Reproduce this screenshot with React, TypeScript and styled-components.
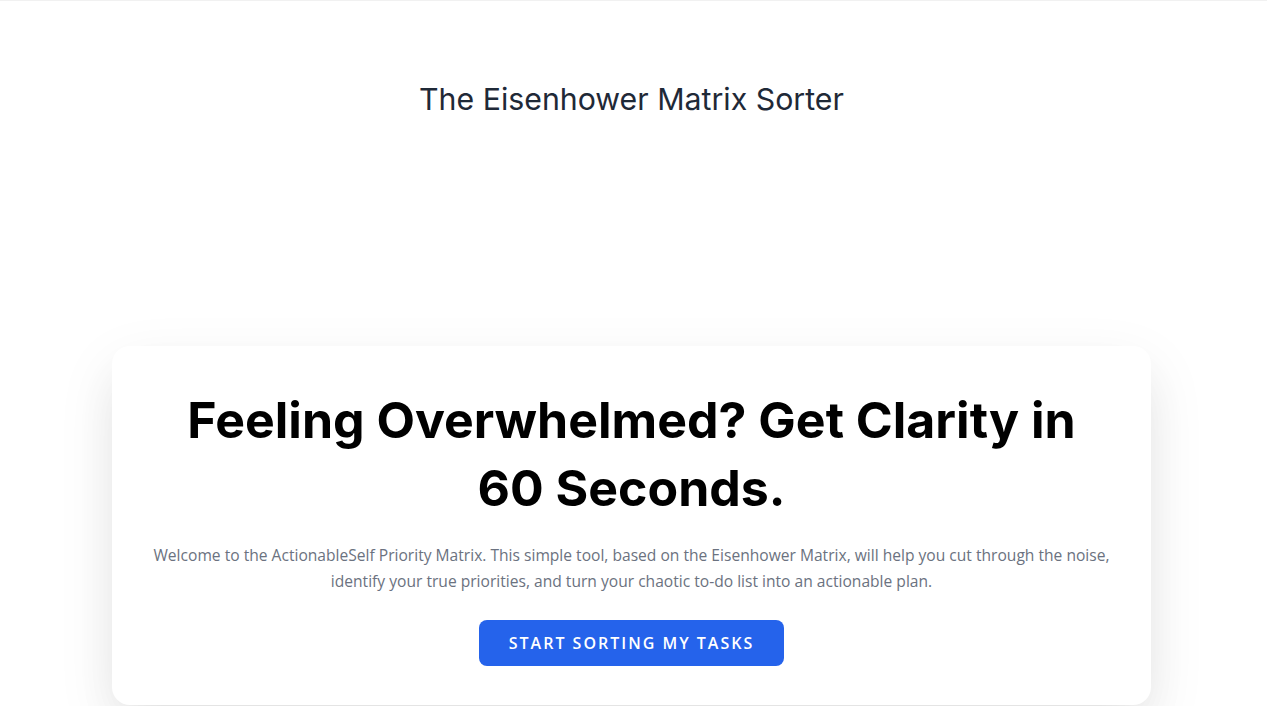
import React from "react";
import styled, { createGlobalStyle } from "styled-components";

const GlobalStyle = createGlobalStyle`
  * { box-sizing: border-box; }
  body {
    margin: 0;
    background: #ffffff;
    font-family: "Open Sans", "Noto Sans", sans-serif;
  }
`;

export default function App() {
  return (
    <>
      <GlobalStyle />
      <Page>
        <Header>
          <SiteTitle>The Eisenhower Matrix Sorter</SiteTitle>
        </Header>
        <Main>
          <IntroCard>
            <Headline>Feeling Overwhelmed? Get Clarity in 60 Seconds.</Headline>
            <Lead>
              Welcome to the ActionableSelf Priority Matrix. This simple tool, based on the Eisenhower
              Matrix, will help you cut through the noise, identify your true priorities, and turn your
              chaotic to-do list into an actionable plan.
            </Lead>
            <StartButton type="button">Start Sorting My Tasks</StartButton>
          </IntroCard>
        </Main>
      </Page>
    </>
  );
}

const Page = styled.div`
  min-height: 100vh;
  border-top: 1px solid #f1f1f1;
  padding-right: 4px;
`;

const Header = styled.header`
  display: flex;
  justify-content: center;
  padding: 80px 0;
`;

const SiteTitle = styled.h1`
  margin: 0;
  font-family: Inter, "Noto Sans", sans-serif;
  font-size: 30.3px;
  font-weight: 400;
  line-height: 36px;
  color: #1f2937;
`;

const Main = styled.main`
  display: flex;
  justify-content: center;
  padding: 149px 0 40px;
`;

const IntroCard = styled.section`
  width: 1039px;
  padding: 40px 40px 39px;
  border-radius: 18px;
  background: #ffffff;
  box-shadow: 0 20px 60px rgba(0, 0, 0, 0.08), 0 25px 50px -12px rgba(0, 0, 0, 0.08);
  display: flex;
  flex-direction: column;
  align-items: center;
  text-align: center;
`;

const Headline = styled.h2`
  margin: 0 0 20px;
  max-width: 920px;
  font-family: Inter, "Noto Sans", sans-serif;
  font-size: 50px;
  font-weight: 700;
  line-height: 68px;
  color: #000000;
`;

const Lead = styled.p`
  margin: 0 0 26px;
  font-size: 15.6px;
  line-height: 26px;
  color: #6b7280;
`;

const StartButton = styled.button`
  height: 46px;
  padding: 0 30px;
  border: none;
  border-radius: 8px;
  background: #2563eb;
  color: #ffffff;
  font-family: "Open Sans", "Noto Sans", sans-serif;
  font-size: 16px;
  font-weight: 600;
  letter-spacing: 2px;
  text-transform: uppercase;
  cursor: pointer;
`;
